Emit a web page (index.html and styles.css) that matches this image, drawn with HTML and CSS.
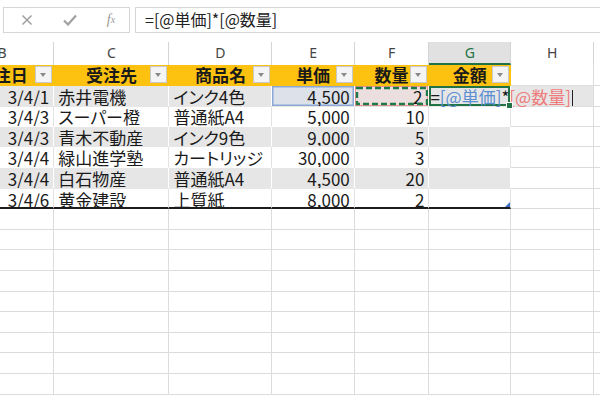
FILE: index.html
```html
<!DOCTYPE html>
<html lang="ja">
<head>
<meta charset="utf-8">
<link rel="stylesheet" href="styles.css">
</head>
<body>
<div class="formula-bar">
  <div class="fx-buttons">
    <span class="fb-icon">
      <svg width="12" height="12" viewBox="0 0 12 12"><path d="M1.5 1.5 L10.5 10.5 M10.5 1.5 L1.5 10.5" stroke="#a0a0a0" stroke-width="1.5" fill="none"/></svg>
    </span>
    <span class="fb-icon">
      <svg width="14" height="12" viewBox="0 0 14 12"><path d="M1 6.5 L5 10.5 L13 1.5" stroke="#a0a0a0" stroke-width="2.2" fill="none"/></svg>
    </span>
    <span class="fb-icon fx"><i>f</i><sub>x</sub></span>
  </div>
  <div class="fx-input">=[@単価]*[@数量]</div>
</div>

<div class="sheet">
  <div class="row col-heads">
    <div class="c ch">B</div><div class="c ch">C</div><div class="c ch">D</div><div class="c ch">E</div><div class="c ch">F</div><div class="c ch sel">G</div><div class="c ch">H</div><div class="c ch">I</div>
  </div>

  <div class="row thead">
    <div class="c th">受注日<span class="dd"></span></div>
    <div class="c th">受注先<span class="dd"></span></div>
    <div class="c th">商品名<span class="dd"></span></div>
    <div class="c th">単価<span class="dd"></span></div>
    <div class="c th">数量<span class="dd"></span></div>
    <div class="c th">金額<span class="dd"></span></div>
    <div class="c"></div><div class="c"></div>
  </div>

  <div class="row tr band">
    <div class="c td num">3/4/1</div><div class="c td">赤井電機</div><div class="c td">インク4色</div>
    <div class="c td num ref-blue">4,500</div>
    <div class="c td num ref-red">2<svg class="ants" width="74" height="20" viewBox="0 0 74 20"><rect x="2" y="2" width="70" height="16" fill="none" stroke="#1f7a4a" stroke-width="2.4" stroke-dasharray="6 3"/></svg></div>
    <div class="c td active"><span class="k">=</span><span class="rb">[@単価]</span><span class="k">*</span><span class="rr">[@数量]</span><span class="caret"></span><span class="handle"></span></div>
    <div class="c edit-over"></div><div class="c"></div>
  </div>

  <div class="row tr plain">
    <div class="c td num">3/4/3</div><div class="c td">スーパー橙</div><div class="c td">普通紙A4</div><div class="c td num">5,000</div><div class="c td num">10</div><div class="c td"></div><div class="c"></div><div class="c"></div>
  </div>
  <div class="row tr band">
    <div class="c td num">3/4/3</div><div class="c td">青木不動産</div><div class="c td">インク9色</div><div class="c td num">9,000</div><div class="c td num">5</div><div class="c td"></div><div class="c"></div><div class="c"></div>
  </div>
  <div class="row tr plain">
    <div class="c td num">3/4/4</div><div class="c td">緑山進学塾</div><div class="c td">カートリッジ</div><div class="c td num">30,000</div><div class="c td num">3</div><div class="c td"></div><div class="c"></div><div class="c"></div>
  </div>
  <div class="row tr band">
    <div class="c td num">3/4/4</div><div class="c td">白石物産</div><div class="c td">普通紙A4</div><div class="c td num">4,500</div><div class="c td num">20</div><div class="c td"></div><div class="c"></div><div class="c"></div>
  </div>
  <div class="row tr plain last">
    <div class="c td num">3/4/6</div><div class="c td">黄金建設</div><div class="c td">上質紙</div><div class="c td num">8,000</div><div class="c td num">2</div><div class="c td corner"></div><div class="c"></div><div class="c"></div>
  </div>

  <div class="row"><div class="c"></div><div class="c"></div><div class="c"></div><div class="c"></div><div class="c"></div><div class="c"></div><div class="c"></div><div class="c"></div></div>
  <div class="row"><div class="c"></div><div class="c"></div><div class="c"></div><div class="c"></div><div class="c"></div><div class="c"></div><div class="c"></div><div class="c"></div></div>
  <div class="row"><div class="c"></div><div class="c"></div><div class="c"></div><div class="c"></div><div class="c"></div><div class="c"></div><div class="c"></div><div class="c"></div></div>
  <div class="row"><div class="c"></div><div class="c"></div><div class="c"></div><div class="c"></div><div class="c"></div><div class="c"></div><div class="c"></div><div class="c"></div></div>
  <div class="row"><div class="c"></div><div class="c"></div><div class="c"></div><div class="c"></div><div class="c"></div><div class="c"></div><div class="c"></div><div class="c"></div></div>
  <div class="row"><div class="c"></div><div class="c"></div><div class="c"></div><div class="c"></div><div class="c"></div><div class="c"></div><div class="c"></div><div class="c"></div></div>
  <div class="row"><div class="c"></div><div class="c"></div><div class="c"></div><div class="c"></div><div class="c"></div><div class="c"></div><div class="c"></div><div class="c"></div></div>
  <div class="row"><div class="c"></div><div class="c"></div><div class="c"></div><div class="c"></div><div class="c"></div><div class="c"></div><div class="c"></div><div class="c"></div></div>
  <div class="row"><div class="c"></div><div class="c"></div><div class="c"></div><div class="c"></div><div class="c"></div><div class="c"></div><div class="c"></div><div class="c"></div></div>
</div>
</body>
</html>
```

FILE: styles.css
```css
html, body {
  margin: 0;
  padding: 0;
  background: #ffffff;
}
body {
  width: 600px;
  height: 400px;
  overflow: hidden;
  font-family: "Noto Sans CJK JP", "Noto Sans", sans-serif;
  color: #1a1a1a;
}

/* formula bar */
.formula-bar {
  display: flex;
  gap: 5px;
  padding: 7px 0 0 3px;
  height: 42px;
  box-sizing: border-box;
}
.fx-buttons {
  width: 127px;
  height: 26px;
  box-sizing: border-box;
  border: 1px solid #d6d6d6;
  display: flex;
  align-items: center;
  padding-left: 16px;
  gap: 29px;
}
.fb-icon {
  display: flex;
  align-items: center;
  justify-content: center;
  width: 14px;
  height: 14px;
}
.fx {
  font-family: "Liberation Serif", serif;
  color: #9a9a9a;
  font-size: 14px;
  line-height: 14px;
  margin-left: -2px;
}
.fx i { font-style: italic; }
.fx sub {
  font-size: 10px;
  font-style: italic;
  vertical-align: -2px;
}
.fx-input {
  flex: 1;
  height: 26px;
  box-sizing: border-box;
  border: 1px solid #d6d6d6;
  border-right: none;
  padding-left: 9px;
  font-size: 16px;
  line-height: 23px;
  color: #222;
  white-space: nowrap;
}

/* sheet grid */
.sheet {
  margin-left: -49px;
}
.row {
  display: grid;
  grid-template-columns: 103.3px 115.2px 103px 82.3px 74.6px 81.9px 83px 80px;
  height: 20.6px;
}
.c {
  position: relative;
  box-sizing: border-box;
  border-right: 1px solid #dcdcdc;
  border-bottom: 1px solid #dcdcdc;
  padding: 1px 3px 0 4px;
  font-size: 17px;
  line-height: 19px;
  white-space: nowrap;
  overflow: hidden;
  font-feature-settings: "palt";
}
.num {
  text-align: right;
  padding-right: 4px;
}

/* column headers */
.col-heads {
  height: 23px;
}
.ch {
  text-align: center;
  font-family: "Noto Sans", sans-serif;
  font-size: 14px;
  line-height: 22px;
  color: #444;
  padding: 0;
  border-bottom: none;
  border-right-color: #d4d4d4;
}
.ch.sel {
  background: #e1e1e1;
  color: #217346;
  border-bottom: 2px solid #217346;
  line-height: 21px;
}

/* table header */
.th {
  background: #fcc20f;
  border-right-color: #fcc20f;
  border-bottom-color: #fcc20f;
  font-weight: bold;
  text-align: center;
  padding: 0;
  line-height: 20px;
  font-feature-settings: normal;
}
.dd {
  position: absolute;
  right: 1px;
  top: 1px;
  width: 17px;
  height: 17px;
  box-sizing: border-box;
  background: #f4f4f4;
  border: 1px solid #c9c9c9;
}
.dd::after {
  content: "";
  position: absolute;
  left: 4px;
  top: 6px;
  border-left: 3.5px solid transparent;
  border-right: 3.5px solid transparent;
  border-top: 4px solid #8a8a8a;
}

/* table body rows */
.band .td {
  background: #e6e6e6;
  border-right-color: #ffffff;
  border-bottom-color: #e6e6e6;
}
.plain .td {
  border-right-color: #e2e2e2;
  border-bottom-color: #ffffff;
}
.last .td {
  border-bottom: 2px solid #1c1c1c;
}

/* active row decorations */
.band .ref-blue {
  background: #dde2ea;
  box-shadow: inset 0 0 0 1.5px #8ba7d6;
}
.band .ref-red {
  background: #ebdede;
  box-shadow: inset 0 0 0 1px #ee9090;
  padding-right: 6px;
}
.ants {
  position: absolute;
  left: 0;
  top: 0;
}
.band .active {
  overflow: visible;
  z-index: 2;
  padding-left: 1px;
  font-feature-settings: normal;
  box-shadow: inset 0 0 0 2px #217346;
}
.band .edit-over {
  background: #e6e6e6;
}
.k { color: #1a1a1a; }
.rb { color: #5b8fd1; }
.rr { color: #ee7a7a; }
.caret {
  display: inline-block;
  width: 1px;
  height: 16px;
  margin-left: 1px;
  background: #222;
  vertical-align: -2px;
}
.handle {
  position: absolute;
  right: -3px;
  bottom: -3px;
  width: 5px;
  height: 5px;
  background: #217346;
  border: 1px solid #ffffff;
}
.corner::after {
  content: "";
  position: absolute;
  right: 0;
  bottom: 0;
  border-left: 5px solid transparent;
  border-bottom: 5px solid #3f6fc4;
}
```
